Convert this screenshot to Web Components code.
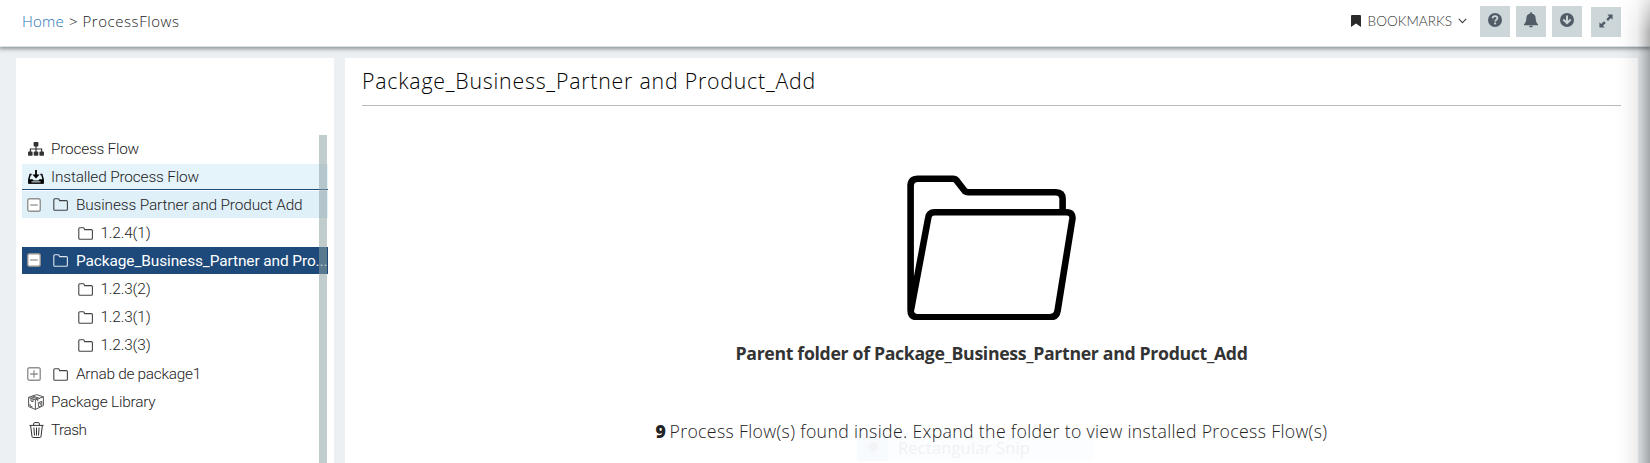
<!DOCTYPE html>
<html lang="en"><head><meta charset="utf-8"><title>ProcessFlows</title>
<style>html,body{margin:0;height:100%;overflow:hidden}body{font-family:Roboto,"Liberation Sans",sans-serif}</style></head>
<body><process-app></process-app>
<script>
const define=(name,html,init)=>customElements.define(name,class extends HTMLElement{
  connectedCallback(){
    if(this.shadowRoot)return;
    const root=this.attachShadow({mode:'open'});
    const t=document.createElement('template');
    t.innerHTML=html(this);
    root.append(t.content.cloneNode(true));
    if(init)init(this,root);
  }
});
/* One line of text, tracked so that it fills the given width */
define('fit-text',()=>`<style>:host{display:block;white-space:nowrap;flex:none}span{display:inline-block}</style><span><slot></slot></span>`,(el,root)=>{
  const s=root.querySelector('span'),w=+el.getAttribute('w');
  const n=el.textContent.length;
  s.style.letterSpacing=((w-s.getBoundingClientRect().width)/n)+'px';
});
const folder='<path fill="none" stroke="currentColor" stroke-width="1.1" stroke-opacity=".85" d="M.8 11.2V1.8Q.8.8 1.8.8H5.2Q6 .8 6.2 1.6L6.6 2.6H13.4Q14.4 2.6 14.4 3.6V11.2Q14.4 12.2 13.4 12.2H1.8Q.8 12.2.8 11.2Z"/>';
const icons={
 folder:[15,13,folder],
 flow:[16,14,'<g fill="#333"><rect x="5.6" y="0" width="4.8" height="4.6" rx=".8"/><rect x="0" y="9.6" width="4.6" height="4.2" rx=".8"/><rect x="5.7" y="9.6" width="4.6" height="4.2" rx=".8"/><rect x="11.4" y="9.6" width="4.6" height="4.2" rx=".8"/><path d="M7.4 4h1.2v2.4h5.6V10H13V7.6H8.6V10H7.4V7.6H3V10H1.8V6.4h5.6z"/></g>'],
 installed:[16,14,'<path fill="none" stroke="#000" stroke-width="1.5" d="M3.6 4.4H2.2L.9 9V13.1H15.1V9L13.8 4.4H12.4"/><path d="M.6 9.2H4.5L5.5 10.5H10.5L11.5 9.2H15.4V13.6H.6ZM7.1 0H8.9V4.5H11.6L8 8.4 4.4 4.5H7.1Z"/><path stroke="#e4f2f9" d="M3.5 11.9h9"/>'],
 box:[16,16,'<g fill="none" stroke="#444" stroke-width=".9"><path d="M.6 3.4 8.6.6 15.4 2.8V11.6L7.4 15.4.6 12.6ZM.6 3.4 7.4 5.8 15.4 2.8M7.4 5.8V15.4M4.7 2 11.5 4.3M2.9 2.7 9.7 5V7.3M3 4.3V7L5 7.8V5M2 9.9V12l2.6 1M10.2 8.8 13.8 7.4V11L12 12.8 10.6 12.4ZM12 8.3V10.3L13 10"/></g>'],
 trash:[15,16,'<g fill="none" stroke="#333" stroke-width="1"><path d="M.5 3.4H14.5M1.6 3.5 3 14.4Q3.1 15.5 4.1 15.5H10.9Q11.9 15.5 12 14.4L13.4 3.5M4.6 3.2V1.8Q4.6.6 5.8.6H9.2Q10.4.6 10.4 1.8V3.2M4.9 5.5 5.5 13.5M7.5 5.5V13.5M10.1 5.5 9.5 13.5"/></g>'],
 minus:[14,14,'<rect x=".75" y=".75" width="12.5" height="12.5" rx="1.8" fill="#fff" stroke="#929292" stroke-width="1.4"/><path d="M3.2 7H10.8" stroke="#929292" stroke-width="1.3"/>'],
 plus:[14,14,'<rect x=".75" y=".75" width="12.5" height="12.5" rx="1.8" fill="#fff" stroke="#929292" stroke-width="1.4"/><path d="M3.2 7H10.8M7 3.2V10.8" stroke="#929292" stroke-width="1.3"/>'],
 bookmark:[10,12,'<path fill="#2b2b2b" d="M0 1Q0 0 1 0H9Q10 0 10 1V12L5 8.4 0 12Z"/>'],
 chevron:[9,6,'<path fill="none" stroke="#444" stroke-width="1.2" d="M.8.9 4.5 4.6 8.2.9"/>'],
 help:[14,14,'<circle cx="7" cy="7" r="7" fill="#525c69"/><path d="M4.6 5.3Q4.8 3.2 7 3.2 9.4 3.2 9.4 5.1 9.4 6.3 8.2 6.9 7.2 7.4 7.2 8.4" fill="none" stroke="#cdd7da" stroke-width="1.7"/><rect x="6.2" y="9.5" width="1.9" height="1.9" fill="#cdd7da"/>'],
 bell:[14,16,'<path fill="#525c69" d="M7 0Q8 0 8 1.5C10.6 2 11.6 4 11.7 6.7 11.8 9 12.4 10.8 14 12.3V13.2H0V12.3C1.6 10.8 2.2 9 2.3 6.7 2.4 4 3.4 2 6 1.5Q6 0 7 0ZM5 13.8H9Q8.8 15.5 7 15.5T5 13.8Z"/>'],
 down:[14,14,'<circle cx="7" cy="7" r="7" fill="#525c69"/><path d="M7 2.6V10.2M3.3 6.5 7 10.2 10.7 6.5" fill="none" stroke="#cdd7da" stroke-width="1.9"/>'],
 expand:[14,14,'<path fill="#525c69" d="M8.3.4H13.6V5.7L11.9 4 9 6.9 7.3 5.2 10.1 2.2ZM5 7.2 6.8 8.9 4 11.8 5.7 13.5H.4V8.2L2.1 9.9Z"/>'],
 open:[170,147,'<g fill="none" stroke="#000" stroke-width="6.6" stroke-linejoin="round"><path d="M155.6 38V26Q155.6 19.2 148.8 19.2H61.2Q58.4 19.2 57 17L49.5 7.4Q48.4 5.7 46 5.7H11Q3.6 5.7 3.6 13V137Q3.6 144.2 10.8 144.2H143Q149.5 144.2 150.6 137.6L165.4 46Q166.2 39.3 159.5 39.3H27.5Q22 39.3 21.2 45L4 137"/></g>']
};
define('ui-icon',el=>{const [w,h,p]=icons[el.getAttribute('name')];
 return `<style>:host{display:block;flex:none;width:${w}px;height:${h}px}svg{display:block}</style><svg width="${w}" height="${h}" viewBox="0 0 ${w} ${h}">${p}</svg>`});
define('tool-button',el=>`<style>:host{display:flex;flex:none;width:30px;height:31px;background:#cdd7da;justify-content:center;align-items:center;padding-bottom:3px;box-sizing:border-box}:host([last]){height:30px;margin:1px 0 0 3px;padding-bottom:2px}</style><ui-icon name="${el.getAttribute('icon')}"></ui-icon>`);
define('app-header',()=>`<style>
:host{display:flex;height:47px;flex:none;box-sizing:border-box;background:#fff;border-bottom:1px solid #dce3e6;box-shadow:0 1px 4px 1px rgba(60,70,75,.55);padding:0 29px 0 22px;position:relative;font-family:"Open Sans",sans-serif;font-weight:350}
nav{display:flex;flex:1;font-size:15px;line-height:43px;gap:5px;color:#222}.home{color:#2672b5}
.marks{display:flex;align-items:center;height:42px;margin-right:13px}
.marks fit-text{margin:0 6px 0 7px;font-family:Lato,sans-serif;font-size:13.6px;font-weight:300;color:#333;line-height:42px}
.tools{display:flex;gap:6px;padding-top:6px}
</style><nav><fit-text class="home" w="42">Home</fit-text><fit-text w="8.5">&gt;</fit-text><fit-text w="97">ProcessFlows</fit-text></nav>
<div class="marks"><ui-icon name="bookmark"></ui-icon><fit-text w="84.5">BOOKMARKS</fit-text><ui-icon name="chevron"></ui-icon></div>
<div class="tools"><tool-button icon="help"></tool-button><tool-button icon="bell"></tool-button><tool-button icon="down"></tool-button><tool-button last icon="expand"></tool-button></div>`);
define('tree-row',el=>{const g=n=>el.getAttribute(n),t=g('toggle');return `<style>
:host{display:flex;align-items:center;height:28px;box-sizing:border-box;font-size:15.4px;font-weight:300;color:#222;padding-left:5px}
:host([level="2"]){padding-left:56px}
.slot{width:${g('level')==='1'?'23px':'22.5px'};display:flex;flex:none;align-items:center}
.slot.c{width:16px;margin-right:7px;justify-content:center;padding-left:1px}
.tog{width:26px;flex:none}
:host([kind="hover"]){background:#e5f3fa;border-bottom:1px solid #1d4a7c;height:26px}
:host([kind="soft"]){background:#e0f0f9;height:27px;margin-top:1px}
:host([kind="active"]){background:#1d4a7b;height:27px;color:#fff;font-weight:400;margin-bottom:1px;padding-top:1px}
:host([kind="active"]) .tog,:host([kind="active"]) .slot{margin-top:-2px}
</style>${t?`<div class="tog"><ui-icon name="${t}"></ui-icon></div>`:''}<div class="slot ${g('level')==='0'?'c':''}"><ui-icon name="${g('icon')}"></ui-icon></div><fit-text w="${g('w')}">${g('label')}</fit-text>`});
define('flow-tree',()=>`<style>
:host{display:block;width:318px;flex:none;background:#fff;position:relative;box-sizing:border-box;padding:77px 6px 0}
.bar{position:absolute;left:303px;top:77px;bottom:0;width:8px;background:rgba(141,161,161,.54)}
.gap{height:1px}
</style>
<tree-row level="0" icon="flow" w="88" label="Process Flow"></tree-row><div class="gap"></div>
<tree-row kind="hover" level="0" icon="installed" w="148" label="Installed Process Flow"></tree-row>
<tree-row kind="soft" level="1" toggle="minus" icon="folder" w="226.5" label="Business Partner and Product Add"></tree-row>
<div class="gap"></div><tree-row level="2" icon="folder" w="50" label="1.2.4(1)"></tree-row>
<tree-row kind="active" level="1" toggle="minus" icon="folder" w="251.5" label="Package_Business_Partner and Pro..."></tree-row>
<tree-row level="2" icon="folder" w="50" label="1.2.3(2)"></tree-row>
<tree-row level="2" icon="folder" w="50" label="1.2.3(1)"></tree-row>
<tree-row level="2" icon="folder" w="50" label="1.2.3(3)"></tree-row>
<div class="gap"></div><tree-row level="1" toggle="plus" icon="folder" w="125" label="Arnab de package1"></tree-row>
<tree-row level="0" icon="box" w="104.5" label="Package Library"></tree-row>
<tree-row level="0" icon="trash" w="35.5" label="Trash"></tree-row>
<div class="bar"></div>`);
define('snip-ghost',()=>`<style>:host{position:absolute;left:512px;top:375px;width:236px;height:28px;display:flex;align-items:center;background:#fcfdff;color:#f0f2f4;font:16.5px "Open Sans",sans-serif}
.i{width:31px;height:28px;background:#f8fbfe;margin-right:10px;display:flex;align-items:center;justify-content:center}.i i{width:10px;height:10px;border-radius:5px;background:#f3f4f6}</style><div class="i"><i></i></div><fit-text w="132">Rectangular Snip</fit-text>`);
define('flow-detail',()=>`<style>
:host{display:flex;flex-direction:column;align-items:center;flex:1;background:#fff;position:relative;padding:0 17px;box-sizing:border-box}
header{width:100%;height:48px;box-sizing:border-box;border-bottom:1px solid #bbb;font:350 21.3px/45px "Open Sans",sans-serif;color:#000;flex:none}
.open{margin-top:67px}
.name{font:700 17.7px/24px "Open Sans",sans-serif;color:#333;margin-top:21px}
.info{display:flex;gap:4px;margin-top:54px;font:300 17.7px/24px "Open Sans",sans-serif;color:#222;position:relative;z-index:1}.info b{font-weight:800}
</style>
<header><fit-text w="454">Package_Business_Partner and Product_Add</fit-text></header>
<ui-icon class="open" name="open"></ui-icon>
<fit-text class="name" w="512">Parent folder of Package_Business_Partner and Product_Add</fit-text>
<div class="info"><b><fit-text w="10">9</fit-text></b><fit-text w="658">Process Flow(s) found inside. Expand the folder to view installed Process Flow(s)</fit-text></div>
<snip-ghost></snip-ghost>`);
define('process-app',()=>`<style>
:host{display:flex;flex-direction:column;height:463px;background:#ecf0f3;position:relative;overflow:hidden}
app-header{z-index:1}main{display:flex;flex:1;gap:11px;padding:11px 12px 0 16px;min-height:0}
.edge{position:absolute;z-index:3;right:0;top:0;bottom:0;width:36px;background:linear-gradient(90deg,transparent,rgba(0,0,0,.015) 30%,rgba(0,0,0,.07) 64%,rgba(0,0,0,.18) 82%,rgba(0,0,0,.31));-webkit-mask:linear-gradient(180deg,rgba(0,0,0,.35),#000 32px)}
</style><app-header></app-header><main><flow-tree></flow-tree><flow-detail></flow-detail></main><div class="edge"></div>`);
</script></body></html>
